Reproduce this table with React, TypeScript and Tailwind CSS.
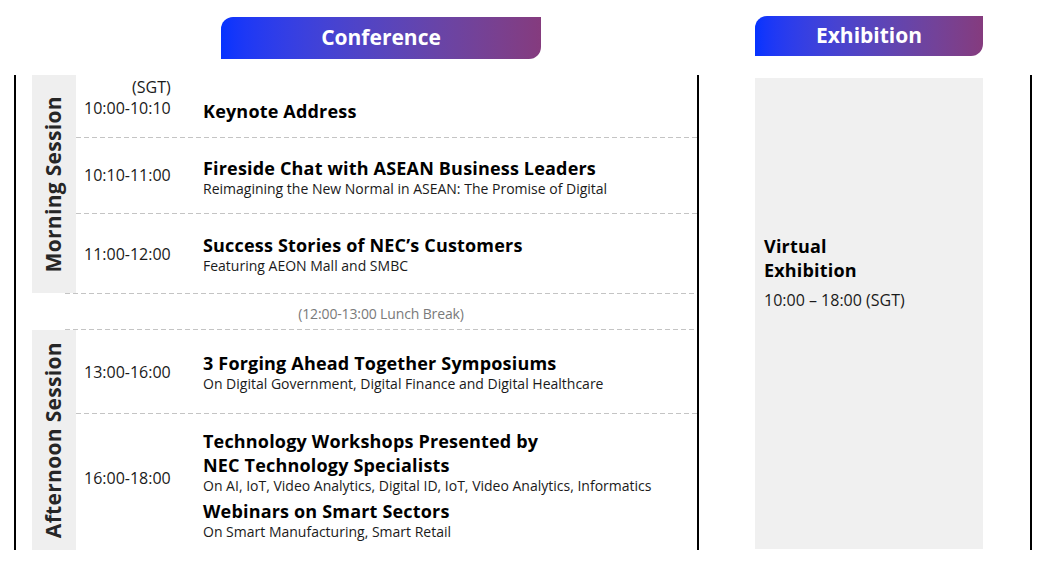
const font = { fontFamily: '"Open Sans", "Noto Sans", sans-serif' };

function Dashed({ className = "" }: { className?: string }) {
  return (
    <div
      className={`h-px shrink-0 bg-[linear-gradient(to_right,#c4c4c4_5px,transparent_5px)] bg-[length:8px_1px] bg-repeat-x ${className}`}
    />
  );
}

function SessionLabel({ text }: { text: string }) {
  return (
    <div className="ml-[16px] flex w-[44px] shrink-0 items-center justify-center bg-[#efefef]">
      <span className="rotate-180 whitespace-nowrap text-[21px] font-bold tracking-[0.015em] text-[#262626] [writing-mode:vertical-rl]">
        {text}
      </span>
    </div>
  );
}

function Title({ children }: { children: React.ReactNode }) {
  return <p className="text-[18px] font-bold leading-6 tracking-[0.01em] text-black">{children}</p>;
}

function Sub({ children }: { children: React.ReactNode }) {
  return <p className="text-[14px] leading-[18px] text-[#1a1a1a]">{children}</p>;
}

function Time({ children }: { children: React.ReactNode }) {
  return (
    <div className="w-[127px] shrink-0 pl-[8px] text-[16px] text-[#1a1a1a]">
      {children}
    </div>
  );
}

export default function App() {
  return (
    <div className="h-[573px] w-[1048px] bg-white" style={font}>
      {/* tabs */}
      <div className="flex h-[75px] items-start">
        <div className="ml-[221px] mt-[17px] flex h-[42px] w-[320px] items-center justify-center rounded-tl-[12px] rounded-br-[12px] bg-linear-to-r from-[#0433ff] to-[#853b7e]">
          <span className="text-[21px] font-bold text-white">Conference</span>
        </div>
        <div className="ml-[214px] mt-[16px] flex h-[40px] w-[228px] items-center justify-center rounded-tl-[12px] rounded-br-[12px] bg-linear-to-r from-[#0433ff] to-[#853b7e]">
          <span className="text-[21px] font-bold text-white">Exhibition</span>
        </div>
      </div>

      {/* body */}
      <div className="flex h-[475px]">
        <div className="ml-[14px] flex w-[685px] flex-col border-x-2 border-black">
          {/* morning */}
          <div className="flex h-[218px]">
            <SessionLabel text="Morning Session" />
            <div className="flex flex-1 flex-col">
              <div className="flex h-[62px] items-start">
                <Time>
                  <div className="inline-flex flex-col items-end pt-[1px] leading-[21px]">
                    <span>(SGT)</span>
                    <span>10:00-10:10</span>
                  </div>
                </Time>
                <div className="pt-[24px]">
                  <Title>Keynote Address</Title>
                </div>
              </div>
              <Dashed />
              <div className="flex h-[75px] items-center">
                <Time>
                  <div className="pb-[2px]">10:10-11:00</div>
                </Time>
                <div className="pt-[3px]">
                  <Title>Fireside Chat with ASEAN Business Leaders</Title>
                  <Sub>Reimagining the New Normal in ASEAN: The Promise of Digital</Sub>
                </div>
              </div>
              <Dashed />
              <div className="flex h-[79px] items-center">
                <Time>11:00-12:00</Time>
                <div className="pt-[1px]">
                  <Title>Success Stories of NEC’s Customers</Title>
                  <Sub>Featuring AEON Mall and SMBC</Sub>
                </div>
              </div>
            </div>
          </div>

          {/* lunch */}
          <div className="ml-[49px] flex h-[37px] flex-col">
            <Dashed />
            <div className="flex flex-1 items-center justify-center pt-[3px] text-[14px] tracking-[-0.01em] text-[#7a7a7a]">
              (12:00-13:00 Lunch Break)
            </div>
            <Dashed />
          </div>

          {/* afternoon */}
          <div className="flex h-[220px]">
            <SessionLabel text="Afternoon Session" />
            <div className="flex flex-1 flex-col">
              <div className="flex h-[83px] items-center">
                <Time>13:00-16:00</Time>
                <div>
                  <Title>3 Forging Ahead Together Symposiums</Title>
                  <Sub>On Digital Government, Digital Finance and Digital Healthcare</Sub>
                </div>
              </div>
              <Dashed />
              <div className="flex h-[136px] items-center">
                <Time>
                  <div className="pb-[8px]">16:00-18:00</div>
                </Time>
                <div className="pt-[6px]">
                  <Title>Technology Workshops Presented by</Title>
                  <Title>NEC Technology Specialists</Title>
                  <Sub>On AI, IoT, Video Analytics, Digital ID, IoT, Video Analytics, Informatics</Sub>
                  <div className="mt-1">
                    <Title>Webinars on Smart Sectors</Title>
                    <Sub>On Smart Manufacturing, Smart Retail</Sub>
                  </div>
                </div>
              </div>
            </div>
          </div>
        </div>

        {/* exhibition */}
        <div className="flex border-r-2 border-black pl-[56px] pr-[47px]">
          <div className="mb-[1px] mt-[3px] w-[228px] bg-[#f0f0f0] pl-[9px] pt-[156px]">
            <Title>Virtual</Title>
            <Title>Exhibition</Title>
            <p className="mt-[6px] text-[16px] text-[#1a1a1a]">10:00 – 18:00 (SGT)</p>
          </div>
        </div>
      </div>
    </div>
  );
}
